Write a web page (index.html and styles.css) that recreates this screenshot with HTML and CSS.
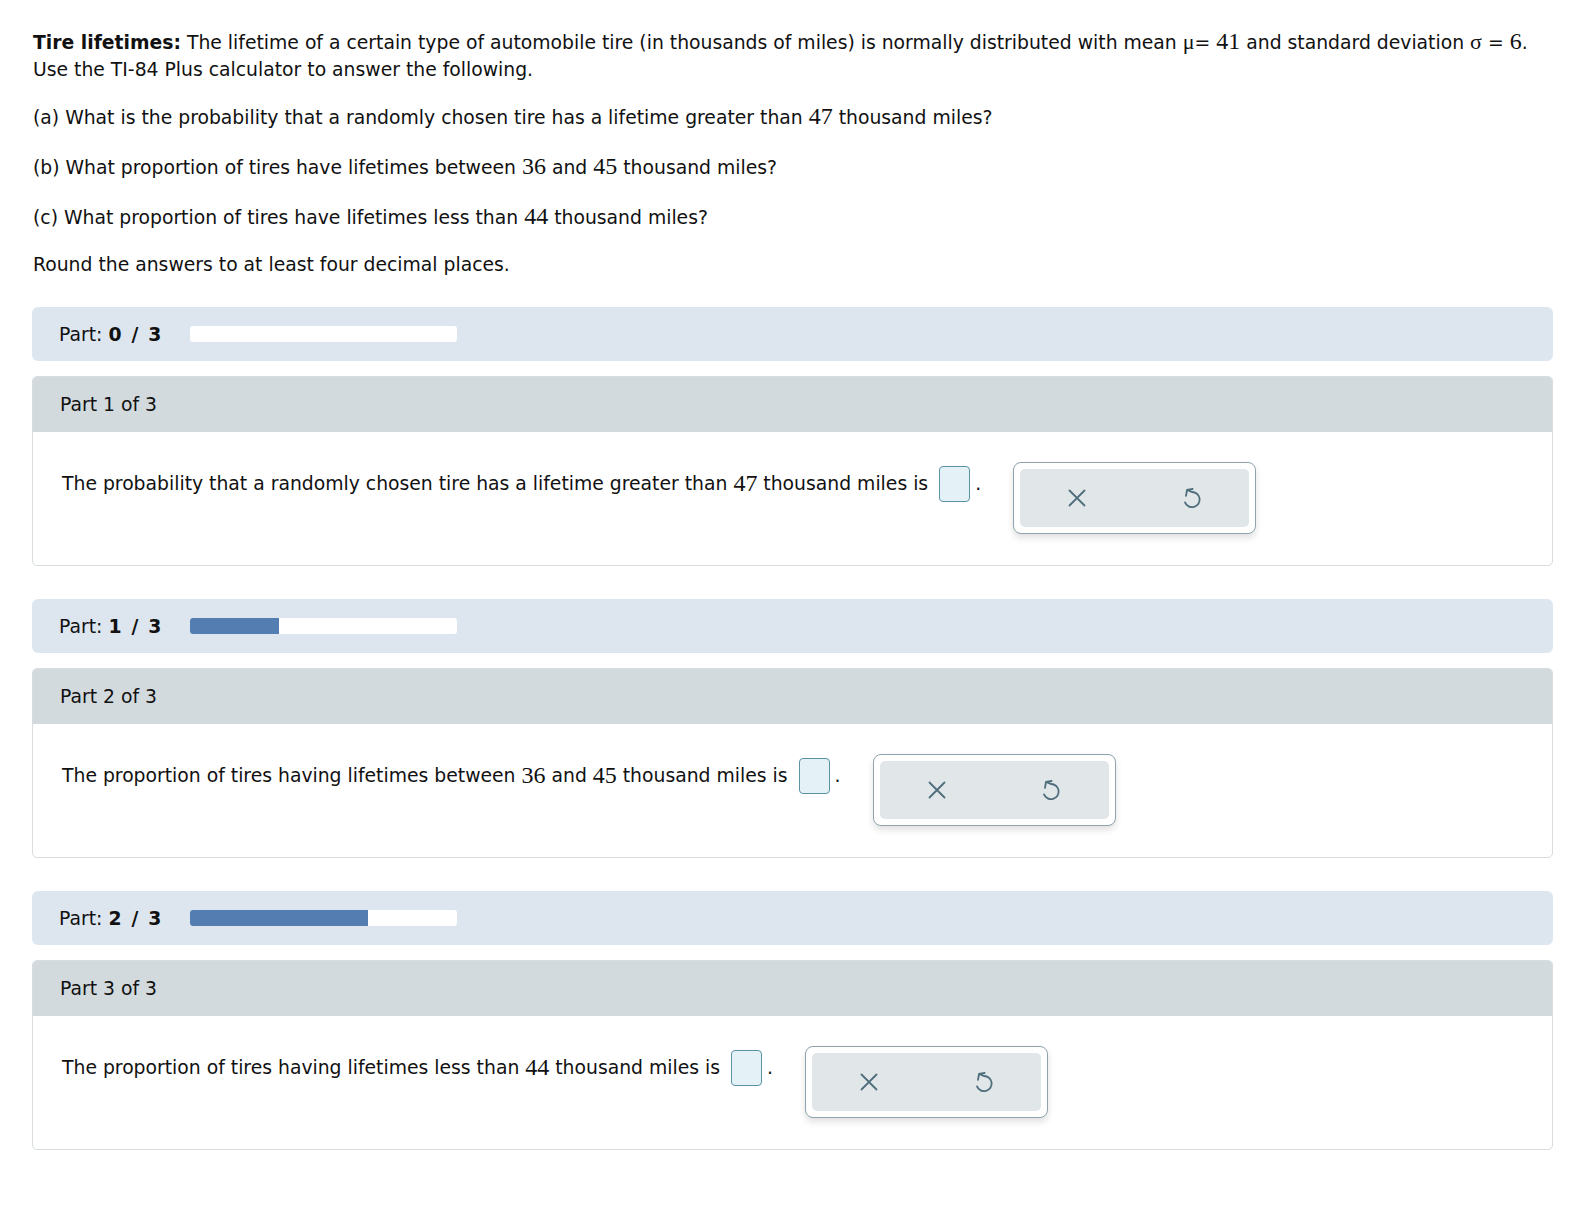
FILE: index.html
```html
<!DOCTYPE html>
<html lang="en">
  <head>
    <meta charset="UTF-8" />
    <title>Tire lifetimes</title>
    <link rel="stylesheet" href="styles.css">
  </head>
  <body>
    <div class="page">
      <div class="intro">
        <p><b>Tire lifetimes:</b> The lifetime of a certain type of automobile tire (in thousands of miles) is normally distributed with mean <span class="sym">μ</span>= <span class="num">41</span> and standard deviation <span class="sym">σ</span> = <span class="num">6</span>.<br />Use the TI-84 Plus calculator to answer the following.</p>
        <p class="question">(a) What is the probability that a randomly chosen tire has a lifetime greater than <span class="num">47</span> thousand miles?</p>
        <p class="question">(b) What proportion of tires have lifetimes between <span class="num">36</span> and <span class="num">45</span> thousand miles?</p>
        <p class="question">(c) What proportion of tires have lifetimes less than <span class="num">44</span> thousand miles?</p>
        <p>Round the answers to at least four decimal places.</p>
      </div>

      <div class="part-bar">
        <span class="part-label">Part: <b>0 / 3</b></span>
        <div class="progress"><div class="progress-fill" style="width: 0%"></div></div>
      </div>
      <div class="card">
        <div class="card-head">Part 1 of 3</div>
        <div class="card-body">
          <div class="answer">
            The probability that a randomly chosen tire has a lifetime greater than&nbsp;<span class="num">47</span>&nbsp;thousand miles is
            <span class="blank"></span><span class="dot">.</span>
          </div>
          <div class="tools">
            <div class="tools-inner">
              <button class="tool">
                <svg width="18" height="18" viewBox="0 0 18 18"><path d="M1.5 1.5 L16.5 16.5 M16.5 1.5 L1.5 16.5" /></svg>
              </button>
              <button class="tool">
                <svg width="20" height="22" viewBox="0 0 20 22"><path d="M3 15.4 A7.6 7.6 0 1 0 9.8 5 L5 3 M5 3 L4 8.8 M5 3 L10.6 2" /></svg>
              </button>
            </div>
          </div>
        </div>
      </div>

      <div class="part-bar">
        <span class="part-label">Part: <b>1 / 3</b></span>
        <div class="progress"><div class="progress-fill" style="width: 33.33%"></div></div>
      </div>
      <div class="card">
        <div class="card-head">Part 2 of 3</div>
        <div class="card-body">
          <div class="answer">
            The proportion of tires having lifetimes between&nbsp;<span class="num">36</span>&nbsp;and&nbsp;<span class="num">45</span>&nbsp;thousand miles is
            <span class="blank"></span><span class="dot">.</span>
          </div>
          <div class="tools">
            <div class="tools-inner">
              <button class="tool">
                <svg width="18" height="18" viewBox="0 0 18 18"><path d="M1.5 1.5 L16.5 16.5 M16.5 1.5 L1.5 16.5" /></svg>
              </button>
              <button class="tool">
                <svg width="20" height="22" viewBox="0 0 20 22"><path d="M3 15.4 A7.6 7.6 0 1 0 9.8 5 L5 3 M5 3 L4 8.8 M5 3 L10.6 2" /></svg>
              </button>
            </div>
          </div>
        </div>
      </div>

      <div class="part-bar">
        <span class="part-label">Part: <b>2 / 3</b></span>
        <div class="progress"><div class="progress-fill" style="width: 66.67%"></div></div>
      </div>
      <div class="card">
        <div class="card-head">Part 3 of 3</div>
        <div class="card-body">
          <div class="answer">
            The proportion of tires having lifetimes less than&nbsp;<span class="num">44</span>&nbsp;thousand miles is
            <span class="blank"></span><span class="dot">.</span>
          </div>
          <div class="tools">
            <div class="tools-inner">
              <button class="tool">
                <svg width="18" height="18" viewBox="0 0 18 18"><path d="M1.5 1.5 L16.5 16.5 M16.5 1.5 L1.5 16.5" /></svg>
              </button>
              <button class="tool">
                <svg width="20" height="22" viewBox="0 0 20 22"><path d="M3 15.4 A7.6 7.6 0 1 0 9.8 5 L5 3 M5 3 L4 8.8 M5 3 L10.6 2" /></svg>
              </button>
            </div>
          </div>
        </div>
      </div>
    </div>
  </body>
</html>
```

FILE: styles.css
```css
body {
  margin: 0;
  font-family: "DejaVu Sans", Verdana, sans-serif;
  font-size: 18.8px;
  color: #111;
  background-color: #fff;
}
.page {
  padding: 28px 25px 40px 32px;
}
.intro p {
  margin: 0 0 18px 1px;
  line-height: 27px;
}
.intro p.question {
  line-height: 31px;
}
.intro p:last-child {
  margin-bottom: 29px;
}
.num {
  font-family: "Liberation Serif", "Times New Roman", serif;
  font-size: 24px;
}
.sym {
  font-family: "Liberation Serif", "Times New Roman", serif;
  font-size: 22px;
}
.part-bar {
  display: flex;
  align-items: center;
  height: 54px;
  padding-left: 27px;
  background-color: #dde6ef;
  border-radius: 6px;
  margin-bottom: 15px;
}
.part-label {
  width: 131px;
}
.part-label b {
  letter-spacing: 1.2px;
  word-spacing: 1px;
}
.progress {
  width: 267px;
  height: 16px;
  background-color: #fff;
  border-radius: 3px;
  overflow: hidden;
}
.progress-fill {
  height: 100%;
  background-color: #547eb1;
}
.card {
  border: 1px solid #d6dce0;
  border-radius: 5px;
  margin-bottom: 33px;
  overflow: hidden;
}
.card-head {
  height: 55px;
  display: flex;
  align-items: center;
  padding-left: 27px;
  background-color: #d3dade;
}
.card-body {
  display: flex;
  align-items: flex-start;
  padding: 30px 28px 31px 29px;
}
.answer {
  display: flex;
  align-items: center;
  height: 37px;
  margin-top: 3px;
  white-space: nowrap;
}
.blank {
  display: inline-block;
  width: 29px;
  height: 34px;
  margin-left: 11px;
  border: 1.5px solid #5a93a6;
  border-radius: 4px;
  background-color: #e4f2f8;
}
.dot {
  margin-left: 5px;
}
.tools {
  margin-left: 32px;
  padding: 6px;
  border: 1px solid #8ea3ad;
  border-radius: 8px;
  background-color: #fff;
  box-shadow: 0 4px 7px rgba(0, 0, 0, 0.12);
}
.tools-inner {
  display: flex;
  width: 229px;
  height: 58px;
  background-color: #e1e6e9;
  border-radius: 5px;
}
.tool {
  flex: 1;
  display: flex;
  align-items: center;
  justify-content: center;
  border: none;
  background: none;
  padding: 0;
  cursor: pointer;
}
.tool svg {
  fill: none;
  stroke: #4e6e7b;
  stroke-width: 1.8;
  stroke-linecap: round;
  stroke-linejoin: round;
}
```
